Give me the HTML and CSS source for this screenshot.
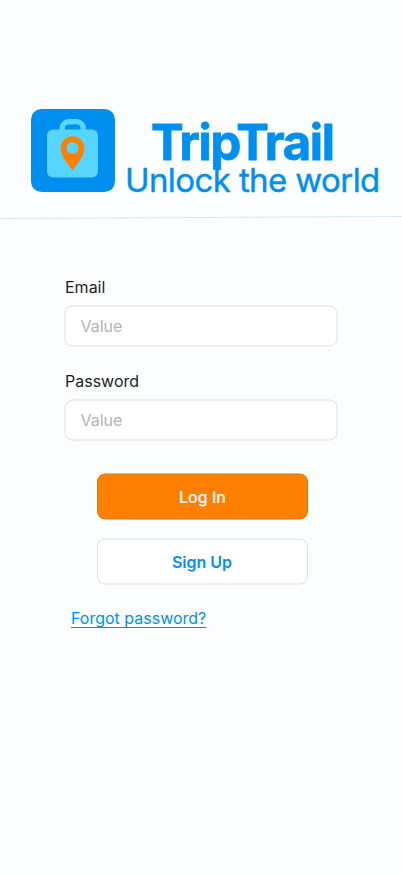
FILE: index.html
```html
<!DOCTYPE html>
<html lang="en">
<head>
<meta charset="utf-8">
<meta name="viewport" content="width=device-width, initial-scale=1">
<title>TripTrail</title>
<link rel="stylesheet" href="styles.css">
</head>
<body>
<header class="brand">
  <svg class="logo" viewBox="0 0 84 83" aria-hidden="true">
    <rect width="84" height="83" rx="10.5" fill="#008fef"/>
    <path d="M31.200 23v-3.700a6.500 6.500 0 0 1 6.500-6.500h8a6.500 6.500 0 0 1 6.500 6.500v3.700" fill="none" stroke="#55d5ff" stroke-width="5.400"/>
    <rect x="16" y="20.500" width="51" height="48" rx="6" fill="#55d5ff"/>
    <path fill-rule="evenodd" fill="#ff8000" d="M41.500 61.300C37 55.500 29.700 47.500 29.700 39.100a11.800 11.800 0 0 1 23.600 0C53.300 47.500 46 55.500 41.500 61.300ZM41.500 33a6 6 0 1 0 0 12a6 6 0 1 0 0-12Z"/>
  </svg>
  <div class="wordmark">
    <h1 class="title">TripTrail</h1>
    <p class="tagline">Unlock the world</p>
  </div>
</header>
<svg class="divider" viewBox="0 0 402 4" aria-hidden="true"><path d="M0 2.500L402 .5" stroke="#cfeafb"/></svg>
<main>
  <form class="login">
    <label class="label" for="email">Email</label>
    <input class="field" id="email" type="email" placeholder="Value">
    <label class="label" for="password">Password</label>
    <input class="field" id="password" type="password" placeholder="Value">
    <div class="actions">
      <button class="button primary" type="button">Log In</button>
      <button class="button secondary" type="button">Sign Up</button>
    </div>
    <a class="forgot" href="#">Forgot password?</a>
  </form>
</main>
</body>
</html>
```
FILE: styles.css
```css
* { box-sizing: border-box; }
body {
  margin: 0;
  min-height: 100vh;
  background: #fcfdff;
  font-family: Inter, "Liberation Sans", sans-serif;
  font-size: 16px;
  color: #1e1e1e;
}
.brand {
  display: flex;
  height: 216px;
  padding: 109px 0 0 31px;
  color: #008fef;
}
.logo { flex: none; width: 84px; height: 83px; }
.wordmark {
  width: 256px;
  margin-left: 10px;
  padding-top: 11px;
  white-space: nowrap;
}
.title {
  margin: 0 0 0 26px;
  font-size: 49px;
  font-weight: 700;
  line-height: 46px;
  letter-spacing: -1.35px;
  -webkit-text-stroke: 0.8px #008fef;
}
.tagline {
  margin: -1px 0 0;
  font-size: 33px;
  line-height: 31px;
  letter-spacing: -0.6px;
  -webkit-text-stroke: 0.4px #008fef;
}
.divider { display: block; width: 100%; height: 4px; }
.login {
  display: flex;
  flex-direction: column;
  width: 273px;
  margin: 56px 0 0 65px;
}
.label { margin-bottom: 7px; line-height: 22px; }
.field {
  height: 41px;
  margin: 0 0 24px;
  padding: 0 15px 2px;
  border: 1px solid #dedfdf;
  border-radius: 8px;
  background: #fff;
  font: inherit;
  transform: translate(-0.5px, 0.5px);
}
.field::placeholder { color: #b3b3b3; opacity: 1; }
.actions {
  display: flex;
  flex-direction: column;
  gap: 19px;
  width: 211px;
  margin: 9px 0 0 32px;
  transform: translateY(0.5px);
}
.button {
  height: 46px;
  padding: 0 1px 0 0;
  border: 1px solid #dedfdf;
  border-radius: 8px;
  background: #fff;
  color: #008fef;
  font: 600 16px Inter, sans-serif;
}
.primary {
  padding: 0;
  border-color: #d8770f;
  background: #ff8000;
  color: #f5f5f5;
  font-weight: 500;
  -webkit-text-stroke: 0.2px #f5f5f5;
}
.forgot {
  align-self: flex-start;
  margin: 23px 0 0 6px;
  line-height: 22px;
  color: #008fef;
  text-decoration: underline;
  text-decoration-skip-ink: none;
  text-underline-offset: 3px;
}
```
